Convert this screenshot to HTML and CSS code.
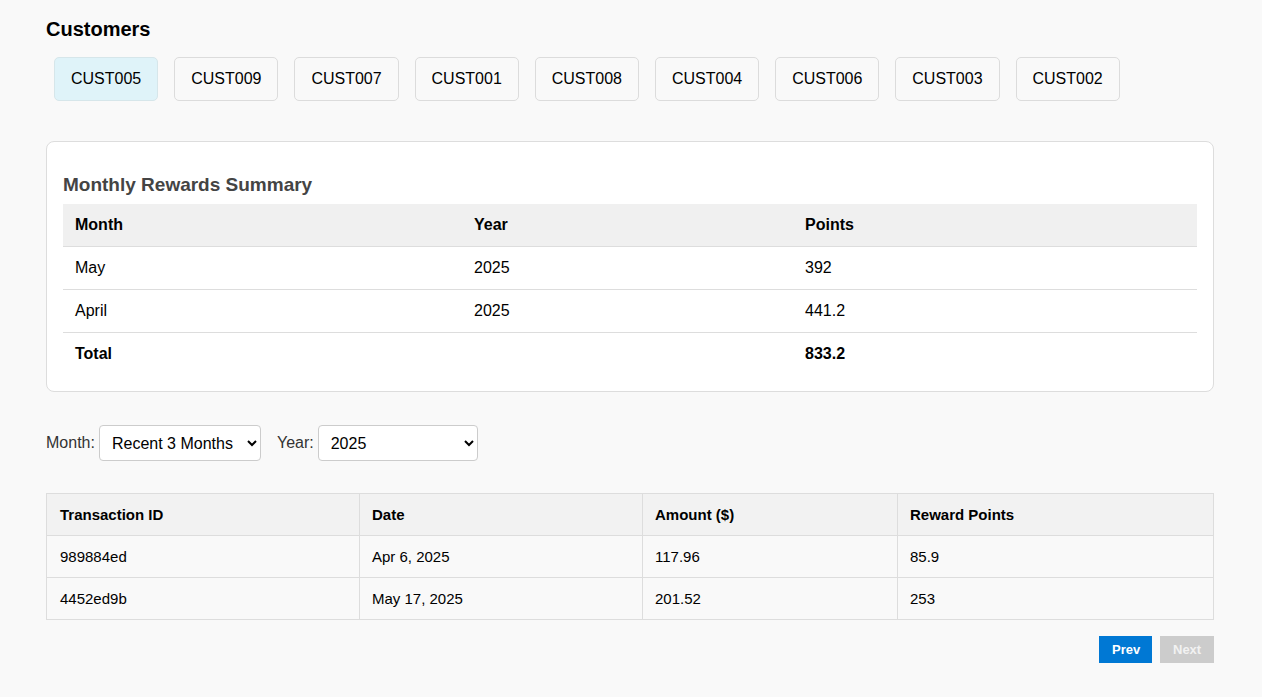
FILE: index.html
```html
<!DOCTYPE html>
<html>
<head>
<meta charset="utf-8">
<link rel="stylesheet" href="styles.css">
</head>
<body>
<div class="app">
  <h2 class="title">Customers</h2>
  <div class="cust-list">
    <button class="cust active">CUST005</button>
    <button class="cust">CUST009</button>
    <button class="cust">CUST007</button>
    <button class="cust">CUST001</button>
    <button class="cust">CUST008</button>
    <button class="cust">CUST004</button>
    <button class="cust">CUST006</button>
    <button class="cust">CUST003</button>
    <button class="cust">CUST002</button>
  </div>

  <div class="card">
    <h3 class="card-title">Monthly Rewards Summary</h3>
    <table class="summary">
      <thead>
        <tr><th class="c1">Month</th><th class="c2">Year</th><th class="c3">Points</th></tr>
      </thead>
      <tbody>
        <tr><td>May</td><td>2025</td><td>392</td></tr>
        <tr><td>April</td><td>2025</td><td>441.2</td></tr>
        <tr class="total"><td>Total</td><td></td><td>833.2</td></tr>
      </tbody>
    </table>
  </div>

  <div class="filters">
    <label class="flabel">Month:</label>
    <select class="sel sel-month"><option>Recent 3 Months</option></select>
    <label class="flabel year-label">Year:</label>
    <select class="sel sel-year"><option>2025</option></select>
  </div>

  <table class="tx">
    <thead>
      <tr><th class="t1">Transaction ID</th><th class="t2">Date</th><th class="t3">Amount ($)</th><th class="t4">Reward Points</th></tr>
    </thead>
    <tbody>
      <tr><td>989884ed</td><td>Apr 6, 2025</td><td>117.96</td><td>85.9</td></tr>
      <tr><td>4452ed9b</td><td>May 17, 2025</td><td>201.52</td><td>253</td></tr>
    </tbody>
  </table>

  <div class="pager">
    <button class="pbtn prev">Prev</button>
    <button class="pbtn next" disabled>Next</button>
  </div>
</div>
</body>
</html>
```
FILE: styles.css
```css
html, body {
  margin: 0;
  padding: 0;
  background: #f9f9f9;
  font-family: "Liberation Sans", Arial, sans-serif;
  color: #000;
}
.app {
  width: 1168px;
  padding: 18px 0 0 46px;
}
.title {
  margin: 0;
  font-size: 20px;
  line-height: 23px;
  font-weight: bold;
}
.cust-list {
  display: flex;
  gap: 16px;
  padding-left: 8px;
  margin-top: 16px;
}
.cust {
  font-family: "Liberation Sans", Arial, sans-serif;
  font-size: 16px;
  line-height: 18px;
  color: #000;
  background: #f9f9f9;
  border: 1px solid #dcdcdc;
  border-radius: 5px;
  padding: 12px 16px;
  height: 44px;
  width: 104.2px;
  text-align: center;
}
.cust.active {
  background: #dff3f9;
  border-color: #d6e6ea;
}
.card {
  margin-top: 40px;
  background: #fff;
  border: 1px solid #dddddd;
  border-radius: 8px;
  padding: 16px;
}
.card-title {
  margin: 15px 0 8px 0;
  font-size: 19px;
  line-height: 23px;
  color: #444;
  font-weight: bold;
}
.summary {
  width: 100%;
  border-collapse: collapse;
  font-size: 16px;
}
.summary th, .summary td {
  text-align: left;
  padding: 0 12px;
  height: 42px;
  border-bottom: 1px solid #dddddd;
}
.summary th {
  background: #f0f0f0;
  font-weight: bold;
}
.summary .c1 { width: 375px; }
.summary .c2 { width: 307px; }
.summary tr.total td {
  font-weight: bold;
  border-bottom: none;
}
.filters {
  display: flex;
  align-items: center;
  margin-top: 33px;
  height: 36px;
}
.flabel {
  font-size: 16px;
  color: #333;
  margin-right: 4px;
}
.year-label {
  margin-left: 16px;
}
.sel {
  font-family: "Liberation Sans", Arial, sans-serif;
  font-size: 16px;
  height: 36px;
  border: 1px solid #cccccc;
  border-radius: 4px;
  background: #fff;
  color: #000;
  padding: 0 8px;
}
.sel-month { width: 162px; }
.sel-year { width: 160px; }
.tx {
  margin-top: 32px;
  width: 100%;
  border-collapse: collapse;
  font-size: 15px;
}
.tx th, .tx td {
  border: 1px solid #dddddd;
  text-align: left;
  padding: 0 12px;
}
.tx th:first-child, .tx td:first-child {
  padding-left: 13px;
}
.tx thead tr { height: 42px; }
.tx tbody tr { height: 42px; }
.tx th {
  background: #f2f2f2;
  font-weight: bold;
}
.tx .t1 { width: 287px; }
.tx .t2 { width: 258px; }
.tx .t3 { width: 230px; }
.pager {
  display: flex;
  justify-content: flex-end;
  gap: 8px;
  margin-top: 16px;
}
.pbtn {
  font-family: "Liberation Sans", Arial, sans-serif;
  font-size: 13px;
  font-weight: bold;
  border: none;
  border-radius: 0;
  height: 27px;
  padding: 0 13px;
  color: #fff;
}
.prev { background: #0078d4; width: 53px; }
.next { background: #cccccc; color: #f2f2f2; width: 54px; }
```
